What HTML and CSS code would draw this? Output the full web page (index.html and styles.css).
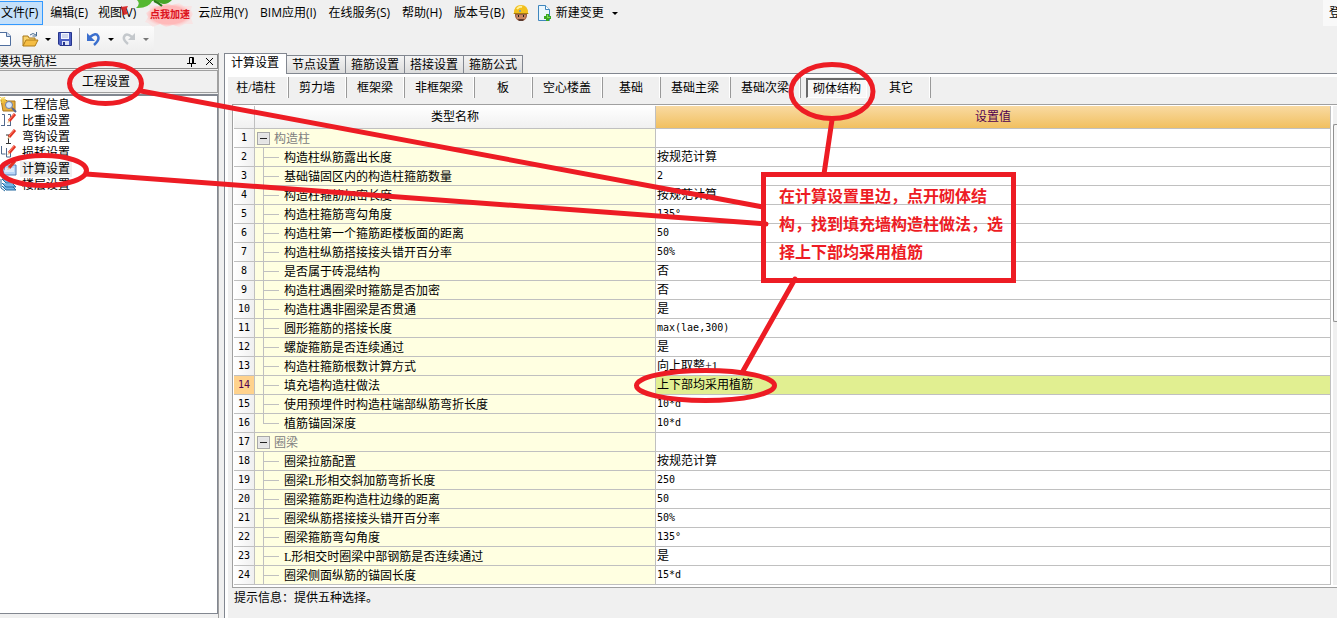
FILE: index.html
```html
<!DOCTYPE html>
<html lang="zh-CN">
<head>
<meta charset="utf-8">
<title>计算设置</title>
<link rel="stylesheet" href="styles.css">
</head>
<body>
<header class="top">
  <nav class="menubar">
    <button class="menu menu-active">文件(F)</button>
    <button class="menu">编辑(E)</button>
    <button class="menu menu-view">视图(V)</button>
    <button class="menu">云应用(Y)</button>
    <button class="menu">BIM应用(I)</button>
    <button class="menu">在线服务(S)</button>
    <button class="menu">帮助(H)</button>
    <button class="menu">版本号(B)</button>
    <button class="menu menu-icon" aria-label="助手">
      <svg width="16" height="16" viewBox="0 0 16 16"><path d="M2 8h12v3q-1 5-6 5t-6-5z" fill="#9b5f43"/><path d="M3 10h10l-1 4H4z" fill="#c98661"/><path d="M5 10h1v2H5zM10 10h1v2h-1z" fill="#222"/><path d="M5 14h6l-1 2H6z" fill="#5a3a30"/><path d="M1 8Q1 0 8 0t7 8l1 1H0z" fill="#f2c01d"/><path d="M4 4q2-3 5-2" stroke="#fff09a" fill="none" stroke-width="2"/><path d="M1 8h14v1H1z" fill="#a47a10"/><circle cx="7" cy="6" r="1" fill="#5599cc"/></svg>
    </button>
    <button class="menu menu-new">
      <svg width="15" height="17" viewBox="0 0 15 17"><path d="M1.500.5h7l4 4v11h-11z" fill="#eaf6fd" stroke="#3e86bd"/><path d="M8.500.5v4h4" fill="#fff" stroke="#3e86bd"/><path d="M9 9h3v2h2v3h-2v2H9v-2H7v-3h2z" fill="#38a822"/><path d="M10 10h1v2h2v1h-3z" fill="#7edc5a"/></svg>
      <span>新建变更</span><i class="caret"></i>
    </button>
    <button class="login">登</button>
  </nav>
  <div class="promo">
    <svg width="58" height="32" viewBox="0 0 58 32"><defs><radialGradient id="glow"><stop offset=".75" stop-color="#ffb9b9"/><stop offset="1" stop-color="#ffd8d8" stop-opacity=".5"/></radialGradient></defs><path d="M9 5l10 1 6-3 7 2 7-2 5 3 8 0-1 4 2 4-2 4 2 6-8 0-6 3-6-2-7 2-6-3-7 3-5-4-3-1 3-5-2-4 4-3z" fill="url(#glow)"/><path d="M-3 0Q8-2 13 0 8 9-4 8 1 4-3 0z" fill="#55b832"/><path d="M12 0h20Q26 6 20 3T12 1z" fill="#47a528"/><path d="M14 1q5 2 8 5" fill="none" stroke="#287a18" stroke-width="2"/></svg>
    <span>点我加速</span>
  </div>
  <svg class="flag" width="8" height="9" viewBox="0 0 8 9"><path d="M0 1l7-1-2 4 2 4-5 1z" fill="#d92f2f"/><path d="M0 0l3 9" stroke="#9d2222"/></svg>
  <div class="toolbar">
    <button aria-label="新建"><svg width="11" height="14" viewBox="0 0 11 14"><path d="M0 .5h7l3.500 3.500v9.500H0" fill="#fff" stroke="#506f9f"/><path d="M6.500.5v4h4" fill="#cfdef3" stroke="#506f9f"/></svg></button>
    <button class="tool-open" aria-label="打开"><svg width="17" height="15" viewBox="0 0 17 15"><path d="M1 14V4h5l1 2h6v3" fill="#f9d36c" stroke="#a8781b"/><path d="M1 14l3-6h12l-3 6z" fill="#f5bd43" stroke="#b17c17"/><path d="M8 3q3-3 6 0M14.500 0v4h-4" fill="none" stroke="#496c91"/></svg><i class="caret"></i></button>
    <button class="tool-save" aria-label="保存"><svg width="14" height="14" viewBox="0 0 14 14"><path d="M.5.500h13v13H2l-1.500-1.500z" fill="#4d5fc2" stroke="#26358c"/><path d="M3 1h8v6H3z" fill="#f4f7ff"/><path d="M4 3h6M4 5h6" stroke="#aab6dc"/><path d="M4 9h7v4H4z" fill="#dce3f6"/><path d="M5 10h2v3H5z" fill="#26358c"/></svg></button>
    <button class="tool-undo" aria-label="撤销"><svg width="14" height="14" viewBox="0 0 14 14"><path d="M3 5q6-5 8-1 2 4-4 9" fill="none" stroke="#3b6fce" stroke-width="2.500"/><path d="M0 1v8h8z" fill="#3b6fce"/></svg><i class="caret"></i></button>
    <button class="tool-redo" aria-label="重做"><svg width="14" height="14" viewBox="0 0 14 14"><path d="M10 5Q4 0 2 5q-1 3 4 7" fill="none" stroke="#c4c8cc" stroke-width="2.500"/><path d="M13 1v7H6z" fill="#c4c8cc"/></svg><i class="caret caret-dim"></i></button>
  </div>
</header>
<main class="work">
  <aside class="side">
    <div class="side-title"><span>模块导航栏</span>
      <button aria-label="固定"><svg width="9" height="10" viewBox="0 0 9 10"><path d="M2.500 6V.5h4V6M5.500 1v5M0 6.500h9M4.500 7v3" fill="none" stroke="#000"/></svg></button>
      <button aria-label="关闭"><svg width="9" height="9" viewBox="0 0 9 9"><path d="M1 1l7 7M8 1L1 8" stroke="#000"/></svg></button>
    </div>
    <button class="module">工程设置</button>
    <ul class="tree">
      <li><svg width="17" height="16" viewBox="0 0 17 16"><path d="M1 3h5l1 1h8v10H3z" fill="#e7ae3c" stroke="#a9761a"/><path d="M0 0l6 5M5 0L1 6M3 0v6M0 3h6" stroke="#f5cf43"/><circle cx="9" cy="8" r="3.500" fill="#d7e7fa" stroke="#6c7da0"/><path d="M12 11l4 4" stroke="#54658e" stroke-width="2"/></svg><button>工程信息</button></li>
      <li><svg width="17" height="16" viewBox="0 0 17 16"><path d="M2 1.500h2.500V13M1 12.500h3M8 1.500h2.500V13M7 12.500h3" fill="none" stroke="#51698c"/><path d="M15 1l-6 7" stroke="#e23424" stroke-width="3"/><path d="M14 1l-5 6" stroke="#ff8b72"/><path d="M9 7l-2 3 3-1z" fill="#e8c28d"/></svg><button>比重设置</button></li>
      <li><svg width="17" height="16" viewBox="0 0 17 16"><path d="M6 6h5M8.500 6v9M6 14.500h5" fill="none" stroke="#333"/><path d="M15 1l-6 7" stroke="#e23424" stroke-width="3"/><path d="M14 1l-5 6" stroke="#ff8b72"/><path d="M9 7l-2 3 3-1z" fill="#e8c28d"/></svg><button>弯钩设置</button></li>
      <li><svg width="17" height="16" viewBox="0 0 17 16"><path d="M1.500 1v8h4M6.500 3v9h4V5" fill="none" stroke="#51698c"/><path d="M15 1l-6 7" stroke="#e23424" stroke-width="3"/><path d="M14 1l-5 6" stroke="#ff8b72"/><path d="M9 7l-2 3 3-1z" fill="#e8c28d"/></svg><button>损耗设置</button></li>
      <li><svg width="17" height="16" viewBox="0 0 17 16"><path d="M5 4h11v10H3z" fill="#b6d4f7" stroke="#577cb5"/><path d="M5 8h9M4 10h10" stroke="#fff"/><path d="M15 0L9 7" stroke="#e23424" stroke-width="3"/><path d="M9 6L7 9l3-1z" fill="#e8c28d"/></svg><button class="selected">计算设置</button></li>
      <li><svg width="17" height="16" viewBox="0 0 17 16"><path d="M2 2h10l4 4H6zM2 6l4 4h10l-3-3M2 9l4 4h10l-3-3" fill="#71b6e8" stroke="#266b9f"/><path d="M1 2v9l4 3" fill="none" stroke="#266b9f"/></svg><button>楼层设置</button></li>
    </ul>
  </aside>
  <section class="panel">
    <div class="tabs">
      <button class="tab tab-on">计算设置</button><button class="tab">节点设置</button><button class="tab">箍筋设置</button><button class="tab">搭接设置</button><button class="tab">箍筋公式</button>
    </div>
    <div class="kinds">
      <button class="kind">柱/墙柱</button><button class="kind">剪力墙</button><button class="kind">框架梁</button><button class="kind">非框架梁</button><button class="kind">板</button><button class="kind">空心楼盖</button><button class="kind">基础</button><button class="kind">基础主梁</button><button class="kind">基础次梁</button><button class="kind kind-on"><span>砌体结构</span></button><button class="kind">其它</button>
    </div>
    <div class="frame">
      <table class="grid">
        <colgroup><col class="c-num"><col class="c-name"><col></colgroup>
        <thead><tr><th></th><th>类型名称</th><th class="h-value">设置值</th></tr></thead>
        <tbody>
          <tr class="group"><th>1</th><td><button aria-label="折叠"></button>构造柱</td><td></td></tr>
          <tr><th>2</th><td>构造柱纵筋露出长度</td><td>按规范计算</td></tr>
          <tr><th>3</th><td>基础锚固区内的构造柱箍筋数量</td><td class="code">2</td></tr>
          <tr><th>4</th><td>构造柱箍筋加密长度</td><td>按规范计算</td></tr>
          <tr><th>5</th><td>构造柱箍筋弯勾角度</td><td class="code">135°</td></tr>
          <tr><th>6</th><td>构造柱第一个箍筋距楼板面的距离</td><td class="code">50</td></tr>
          <tr><th>7</th><td>构造柱纵筋搭接接头错开百分率</td><td class="code">50%</td></tr>
          <tr><th>8</th><td>是否属于砖混结构</td><td>否</td></tr>
          <tr><th>9</th><td>构造柱遇圈梁时箍筋是否加密</td><td>否</td></tr>
          <tr><th>10</th><td>构造柱遇非圈梁是否贯通</td><td>是</td></tr>
          <tr><th>11</th><td>圆形箍筋的搭接长度</td><td class="code">max(lae,300)</td></tr>
          <tr><th>12</th><td>螺旋箍筋是否连续通过</td><td>是</td></tr>
          <tr><th>13</th><td>构造柱箍筋根数计算方式</td><td>向上取整+1</td></tr>
          <tr class="current"><th>14</th><td>填充墙构造柱做法</td><td>上下部均采用植筋</td></tr>
          <tr><th>15</th><td>使用预埋件时构造柱端部纵筋弯折长度</td><td class="code">10*d</td></tr>
          <tr class="last"><th>16</th><td>植筋锚固深度</td><td class="code">10*d</td></tr>
          <tr class="group"><th>17</th><td><button aria-label="折叠"></button>圈梁</td><td></td></tr>
          <tr><th>18</th><td>圈梁拉筋配置</td><td>按规范计算</td></tr>
          <tr><th>19</th><td>圈梁L形相交斜加筋弯折长度</td><td class="code">250</td></tr>
          <tr><th>20</th><td>圈梁箍筋距构造柱边缘的距离</td><td class="code">50</td></tr>
          <tr><th>21</th><td>圈梁纵筋搭接接头错开百分率</td><td class="code">50%</td></tr>
          <tr><th>22</th><td>圈梁箍筋弯勾角度</td><td class="code">135°</td></tr>
          <tr><th>23</th><td>L形相交时圈梁中部钢筋是否连续通过</td><td>是</td></tr>
          <tr><th>24</th><td>圈梁侧面纵筋的锚固长度</td><td class="code">15*d</td></tr>
        </tbody>
      </table>
      <div class="scroll"><div class="thumb"></div></div>
    </div>
    <p class="hint">提示信息：提供五种选择。</p>
  </section>
</main>
<svg class="marks" width="1020" height="410" viewBox="0 0 1020 410" fill="none" stroke="#ed1c24" stroke-width="5" stroke-linecap="round">
  <ellipse cx="105.500" cy="83.500" rx="36" ry="20"/>
  <ellipse cx="43.500" cy="170.500" rx="43" ry="15"/>
  <ellipse cx="832" cy="91.500" rx="41" ry="27"/>
  <ellipse cx="705.500" cy="385.500" rx="69" ry="15"/>
  <path d="M141 91L763 207M86 174L766 224M832 120L824 174M795 279L743 371"/>
</svg>
<div class="callout">在计算设置里边，点开砌体结构，找到填充墙构造柱做法，选择上下部均采用植筋</div>
</body>
</html>
```
FILE: styles.css
```css
* { box-sizing: border-box; }
body {
  margin: 0;
  min-height: 100vh;
  display: flex;
  flex-direction: column;
  position: relative;
  overflow: hidden;
  background: #f0f0f0;
  color: #000;
  font: 12px/18px "Liberation Serif", "Noto Sans CJK SC", sans-serif;
}
button {
  margin: 0;
  padding: 0;
  border: 0;
  background: none;
  color: inherit;
  font: inherit;
  white-space: nowrap;
}
svg { display: block; flex: none; }

.top { position: relative; height: 53px; flex: none; }
.menubar {
  display: flex;
  align-items: center;
  gap: 2px;
  height: 26px;
  overflow: hidden;
  font-family: "Open Sans", "Noto Sans CJK SC", sans-serif;
}
.menu { height: 24px; padding: 0 5px; flex: none; }
.menu-active {
  padding: 0 4px 0 1px;
  border: 1px solid #3399ff;
  border-left: 0;
  background: #c5e0fa;
}
.menu-view { margin-right: 50px; margin-left: -2px; }
.menu-icon { padding: 0 1px; }
.menu-new { display: flex; align-items: center; gap: 4px; }
.caret {
  display: block;
  border: 3px solid transparent;
  border-top-color: #000;
  border-bottom: 0;
}
.menu-new .caret { margin-left: 4px; }
.caret-dim { border-top-color: #777; }
.login {
  margin-left: auto;
  width: 14px;
  height: 26px;
  padding-left: 6px;
  overflow: hidden;
  background: #f9f9f9;
  text-align: left;
  flex: none;
}
.promo { position: absolute; left: 140px; top: 0; }
.promo svg { overflow: visible; }
.promo span {
  position: absolute;
  left: 10px;
  top: 5px;
  color: #dc1420;
  font: bold 10px/18px "Noto Sans CJK SC", sans-serif;
  white-space: nowrap;
}
.flag { position: absolute; left: 121px; top: 6px; }
.toolbar {
  display: flex;
  align-items: center;
  width: 154px;
  height: 26px;
  background: linear-gradient(#fcfcfc, #eeeeee);
}
.toolbar button { display: flex; align-items: center; gap: 6px; height: 22px; }
.toolbar .tool-open { margin-left: 11px; }
.toolbar .tool-save { margin-left: 7px; padding-right: 7px; }
.toolbar .tool-undo { border-left: 1px solid #aaa; padding-left: 7px; gap: 7px; }
.toolbar .tool-redo { margin-left: 8px; gap: 7px; }

.work { display: flex; flex: 1; }
.side {
  width: 219px;
  flex: none;
  display: flex;
  flex-direction: column;
  padding-top: 1px;
  border-right: 1px solid #a0a0a0;
}
.side-title {
  display: flex;
  align-items: center;
  gap: 9px;
  height: 15px;
  border: 1px solid #888;
  border-left: 0;
  padding-right: 3px;
  line-height: 15px;
}
.side-title span { flex: 1; height: 13px; text-indent: -3px; }
.module {
  height: 23px;
  margin: 1px 0;
  padding: 1px 5px 0 0;
  border: 1px solid #a0a0a0;
  border-left: 0;
  line-height: 20px;
}
.tree {
  flex: 1;
  margin: 0 0 4px;
  padding: 1px 0 0;
  list-style: none;
  background: #fff;
  border: 1px solid #828790;
  border-width: 2px 1px 1px 0;
}
.tree li { display: flex; align-items: center; gap: 3px; height: 16px; }
.tree button { height: 16px; line-height: 16px; padding: 0 2px; }
.tree .selected { background: #f0f0f0; }

.panel {
  flex: 1;
  min-width: 0;
  margin-left: 5px;
  border-left: 1px solid #828790;
  box-shadow: inset 3px 0 #fff;
}
.tabs {
  display: flex;
  align-items: flex-end;
  height: 24px;
  border-bottom: 3px solid #fff;
  box-shadow: inset 0 -1px #828790;
}
.tab {
  height: 19px;
  padding: 0 5px;
  border: 1px solid #828790;
  border-left-width: 0;
  background: linear-gradient(#f4f4f4, #dcdcdc);
  line-height: 18px;
}
.tab-on {
  height: 21px;
  padding: 0 7px 2px 6px;
  border-bottom: 0;
  background: #fff;
}
.kinds { display: flex; height: 27px; }
.kind {
  height: 21px;
  min-width: 58px;
  padding: 0 11px 0 10px;
  border-right: 1px solid #999;
  box-shadow: inset -1px 0 #fff;
}
.kind:first-child { min-width: 64px; }
.kind-on { padding: 0 6px 0 5px; border-right: 0; box-shadow: none; }
.kind-on span {
  display: block;
  height: 20px;
  padding: 0 5px;
  border: 1px solid #696969;
  border-width: 2px 1px 1px 2px;
  border-right-color: #fff;
  border-bottom-color: #fff;
  background: #f8f8f8;
}

.frame {
  display: flex;
  margin-left: 7px;
  padding: 1px 0 2px 1px;
  border: 1px solid #a0a0a0;
  border-right: 0;
  background: #fff;
}
.grid {
  flex: 1;
  min-width: 0;
  table-layout: fixed;
  border-collapse: separate;
  border-spacing: 0;
}
.c-num { width: 21px; }
.c-name { width: 401px; }
.grid th, .grid td {
  height: 19px;
  padding: 0;
  border: 1px solid #c0c0c0;
  border-width: 0 1px 1px 0;
  font-weight: normal;
  line-height: 18px;
  text-align: left;
  white-space: nowrap;
}
.grid thead th {
  height: 23px;
  background: linear-gradient(#fff, #f0f0f0);
  text-align: center;
}
.grid thead .h-value { background: linear-gradient(#f9daa2, #f1c060); color: #500050; }
.grid tbody th {
  background: linear-gradient(90deg, #fff, #f0f0f0);
  font-family: "DejaVu Sans Mono", monospace;
  font-size: 10px;
  text-align: center;
}
.grid td:nth-child(2) {
  padding: 2px 0 0 29px;
  background:
    linear-gradient(#c0c0c0, #c0c0c0) 8px 0 / 1px 100% no-repeat,
    linear-gradient(#c0c0c0, #c0c0c0) 8px 9px / 16px 1px no-repeat,
    #ffffe1;
  line-height: 16px;
}
.grid .last td:nth-child(2) { background-size: 1px 9px, 16px 1px, auto; }
.grid .group td:nth-child(2) { padding-left: 2px; background: #ffffe1; color: #808080; }
.group button {
  display: inline-block;
  width: 13px;
  height: 13px;
  margin-right: 4px;
  border: 1px solid #a8a8a8;
  box-shadow: inset 0 0 0 1px #e8e8e8;
  background: linear-gradient(#222, #222) center / 7px 1px no-repeat, #e4e4e4;
  vertical-align: -1px;
}
.grid td:nth-child(3) { padding-left: 1px; }
.grid td.code { font-family: "DejaVu Sans Mono", monospace; font-size: 10px; }
.grid .current th { background: #ffd28c; color: #500050; }
.grid .current td:nth-child(3) { background: #e1ef91; }
.scroll {
  width: 6px;
  flex: none;
  padding-top: 18px;
  background: #f0f0f0;
  border-left: 2px solid #fff;
}
.thumb {
  height: 198px;
  border: 1px solid #909090;
  border-right: 0;
  border-radius: 2px 0 0 2px;
  background: #f6f6f6;
}
.hint { margin: 0 0 0 9px; line-height: 20px; }

.marks { position: absolute; left: 0; top: 0; pointer-events: none; }
.callout {
  position: absolute;
  left: 761px;
  top: 172px;
  width: 255px;
  height: 111px;
  padding: 4px 4px 0 13px;
  border: 5px solid #ed1c24;
  color: #ed1c24;
  font: bold 16px/28px "Noto Sans CJK SC", sans-serif;
}
```
